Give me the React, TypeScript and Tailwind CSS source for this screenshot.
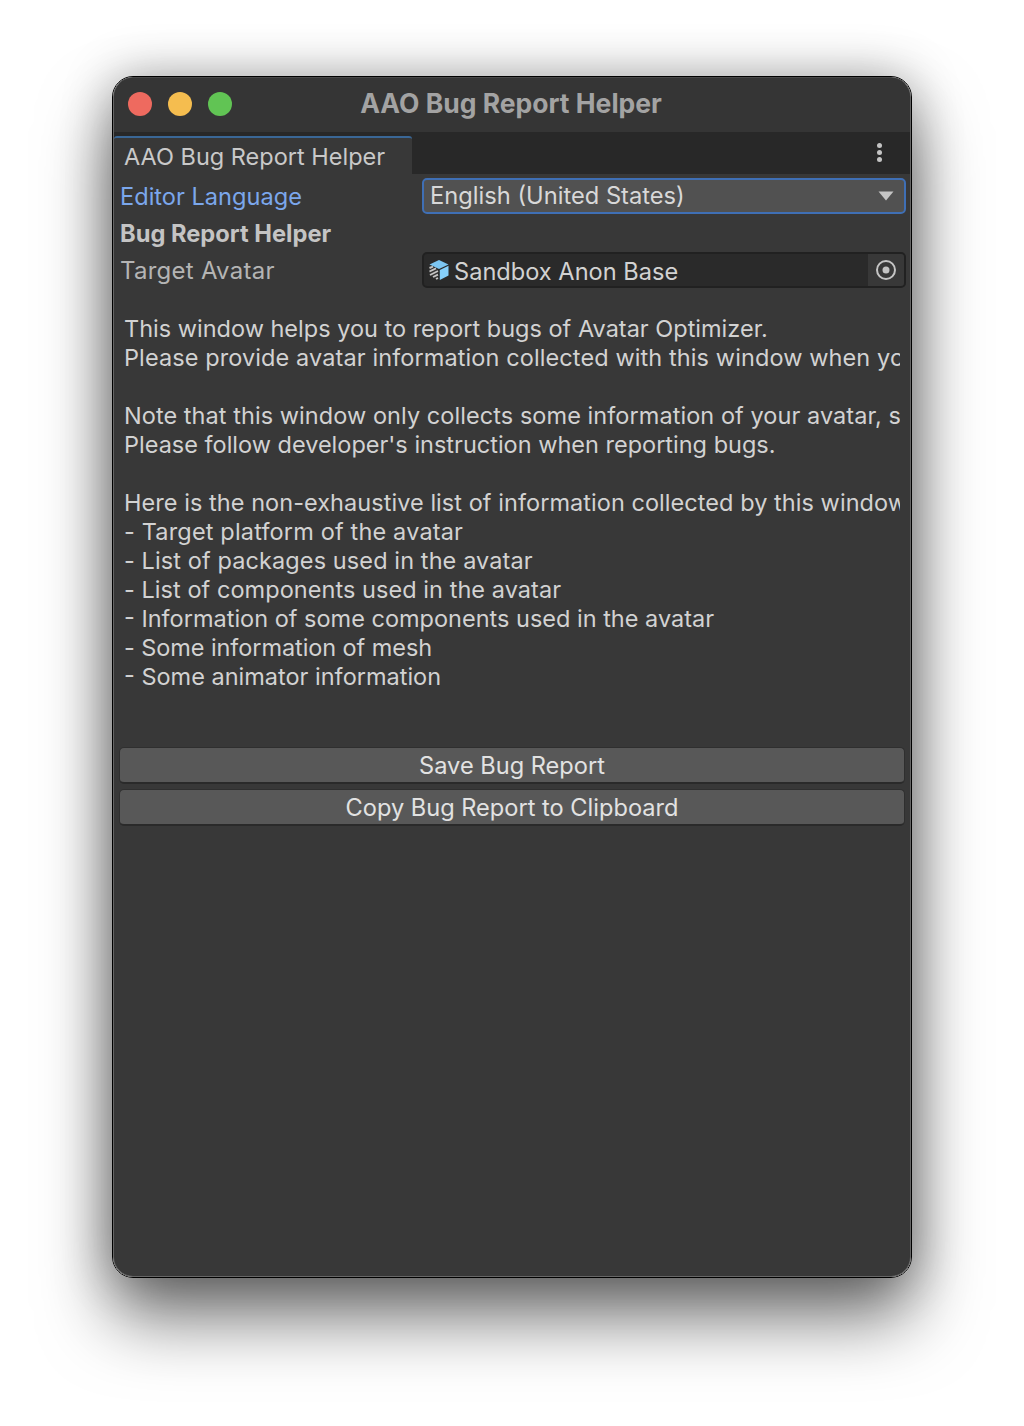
const infoLines = [
  { text: "This window helps you to report bugs of Avatar Optimizer.", className: "" },
  { text: "Please provide avatar information collected with this window when you report bugs.", className: "tracking-[0.1px]" },
  { text: " ", className: "" },
  { text: "Note that this window only collects some information of your avatar, so it may not be enough.", className: "tracking-[0.06px]" },
  { text: "Please follow developer's instruction when reporting bugs.", className: "" },
  { text: " ", className: "" },
  { text: "Here is the non-exhaustive list of information collected by this window:", className: "tracking-[0.05px]" },
  { text: "- Target platform of the avatar", className: "tracking-[0.16px]" },
  { text: "- List of packages used in the avatar", className: "tracking-[0.1px]" },
  { text: "- List of components used in the avatar", className: "tracking-[0.05px]" },
  { text: "- Information of some components used in the avatar", className: "" },
  { text: "- Some information of mesh", className: "tracking-[-0.08px]" },
  { text: "- Some animator information", className: "" },
]

function CubeIcon() {
  return (
    <svg width="22" height="22" viewBox="0 0 22 22" className="shrink-0 -ml-px">
      <path d="M11 1 L20.5 5.5 L11 10 L1.5 5.5 Z" fill="#7cc6f2" />
      <path d="M11.8 11 L20.5 6.8 L20.5 16.6 L11.8 21 Z" fill="#86d0fb" />
      <path d="M1.5 6.8 L10.2 11 L10.2 21 L1.5 16.6 Z" fill="#333333" />
      <path d="M1.5 9 L5 7.6 M1.5 12.5 L8 9.4 M2 16 L10 12 M5 18 L10 15.6 M8 20 L10 19" stroke="#c4c4c4" strokeWidth="1.9" fill="none" />
    </svg>
  )
}

export default function App() {
  return (
    <div className="h-[1426px] bg-white pt-[76px] px-[112px] font-['Inter',sans-serif] text-[23.5px] overflow-hidden">
      <div className="h-[1202px] rounded-[21px] border border-black shadow-[0_40px_70px_rgba(0,0,0,0.55),0_0_50px_rgba(0,0,0,0.3)]">
        <div className="h-full rounded-[20px] bg-[#383838] border border-[#666666] border-t-[#484848] overflow-hidden flex flex-col">
          <div className="h-[54px] shrink-0 bg-[#353535] flex items-center pl-[14px] relative">
            <div className="flex gap-[16px] mb-[2px]">
              <div className="w-6 h-6 rounded-full bg-[#ee6a5f]" />
              <div className="w-6 h-6 rounded-full bg-[#f5bd4f]" />
              <div className="w-6 h-6 rounded-full bg-[#61c454]" />
            </div>
            <div className="absolute inset-x-0 top-[9px] pr-[2px] text-center font-bold text-[#a3a3a3] text-[26.5px] leading-[32px]">
              AAO Bug Report Helper
            </div>
          </div>

          <div className="h-[42px] shrink-0 bg-[#282828] flex items-end justify-between">
            <div className="h-[38px] w-[298px] bg-[#383838] border-t-2 border-[#3a6796] rounded-t-[3px] pl-[10px] text-[#c9c9c9] leading-[38px]">
              AAO Bug Report Helper
            </div>
            <div className="flex flex-col gap-[2px] mr-[28px] mb-[12px]">
              <div className="w-[5px] h-[5px] rounded-full bg-[#c4c4c4]" />
              <div className="w-[5px] h-[5px] rounded-full bg-[#c4c4c4]" />
              <div className="w-[5px] h-[5px] rounded-full bg-[#c4c4c4]" />
            </div>
          </div>

          <div className="flex flex-col pl-[6px] pr-[5px] pt-[4px]">
            <div className="flex items-center h-[36px] -mr-px">
              <div className="w-[302px] text-[#7ba7ec] text-[23.6px] leading-[36px] pt-[2px]">Editor Language</div>
              <div className="flex-1 h-[36px] rounded-[5px] bg-[#515151] border-2 border-[#3f6fb5] flex items-center justify-between pl-[6px] pr-[10px] text-[#d8d8d8] text-[23.7px]">
                <span className="leading-[30px]">English (United States)</span>
                <svg width="16" height="10" viewBox="0 0 16 10">
                  <path d="M0.5 0.5 H15.5 L8 9.5 Z" fill="#c4c4c4" />
                </svg>
              </div>
            </div>
            <div className="h-[37px] font-bold text-[#c4c4c4] text-[23.7px] leading-[37px] mt-[1px]">Bug Report Helper</div>
            <div className="flex items-center h-[36px] -mr-px">
              <div className="w-[302px] text-[#b4b4b4] text-[24px] tracking-[0.25px] leading-[36px] pt-[2px]">Target Avatar</div>
              <div className="flex-1 h-[36px] rounded-[5px] bg-[#2a2a2a] border-2 border-[#212121] flex items-center overflow-hidden">
                <div className="flex-1 flex items-center gap-[4px] pl-[5px] text-[#d2d2d2] text-[23.6px] leading-[34px]">
                  <CubeIcon />
                  <span className="pt-[4px]">Sandbox Anon Base</span>
                </div>
                <div className="w-[36px] h-full bg-[#383838] flex items-center justify-center">
                  <svg width="22" height="22" viewBox="0 0 22 22" fill="none">
                    <circle cx="11" cy="11" r="9" stroke="#c4c4c4" strokeWidth="2" />
                    <circle cx="11" cy="11" r="3.5" fill="#c4c4c4" />
                  </svg>
                </div>
              </div>
            </div>

            <div className="mt-[26px] ml-[4px] mr-[5px] text-[#d2d2d2] leading-[29px] overflow-hidden whitespace-pre">
              {infoLines.map((line, i) => (
                <div key={i} className={line.className}>{line.text}</div>
              ))}
            </div>

            <div className="mt-[56px] -ml-px flex flex-col gap-[5px]">
              <button className="h-[37px] rounded-[5px] bg-[#585858] border border-[#2f2f2f] border-b-2 border-b-[#2a2a2a] text-[#e2e2e2] text-[23.6px] leading-[36px]">
                Save Bug Report
              </button>
              <button className="h-[37px] rounded-[5px] bg-[#585858] border border-[#2f2f2f] border-b-2 border-b-[#2a2a2a] text-[#e2e2e2] text-[23.6px] leading-[36px]">
                Copy Bug Report to Clipboard
              </button>
            </div>
          </div>
        </div>
      </div>
    </div>
  )
}
